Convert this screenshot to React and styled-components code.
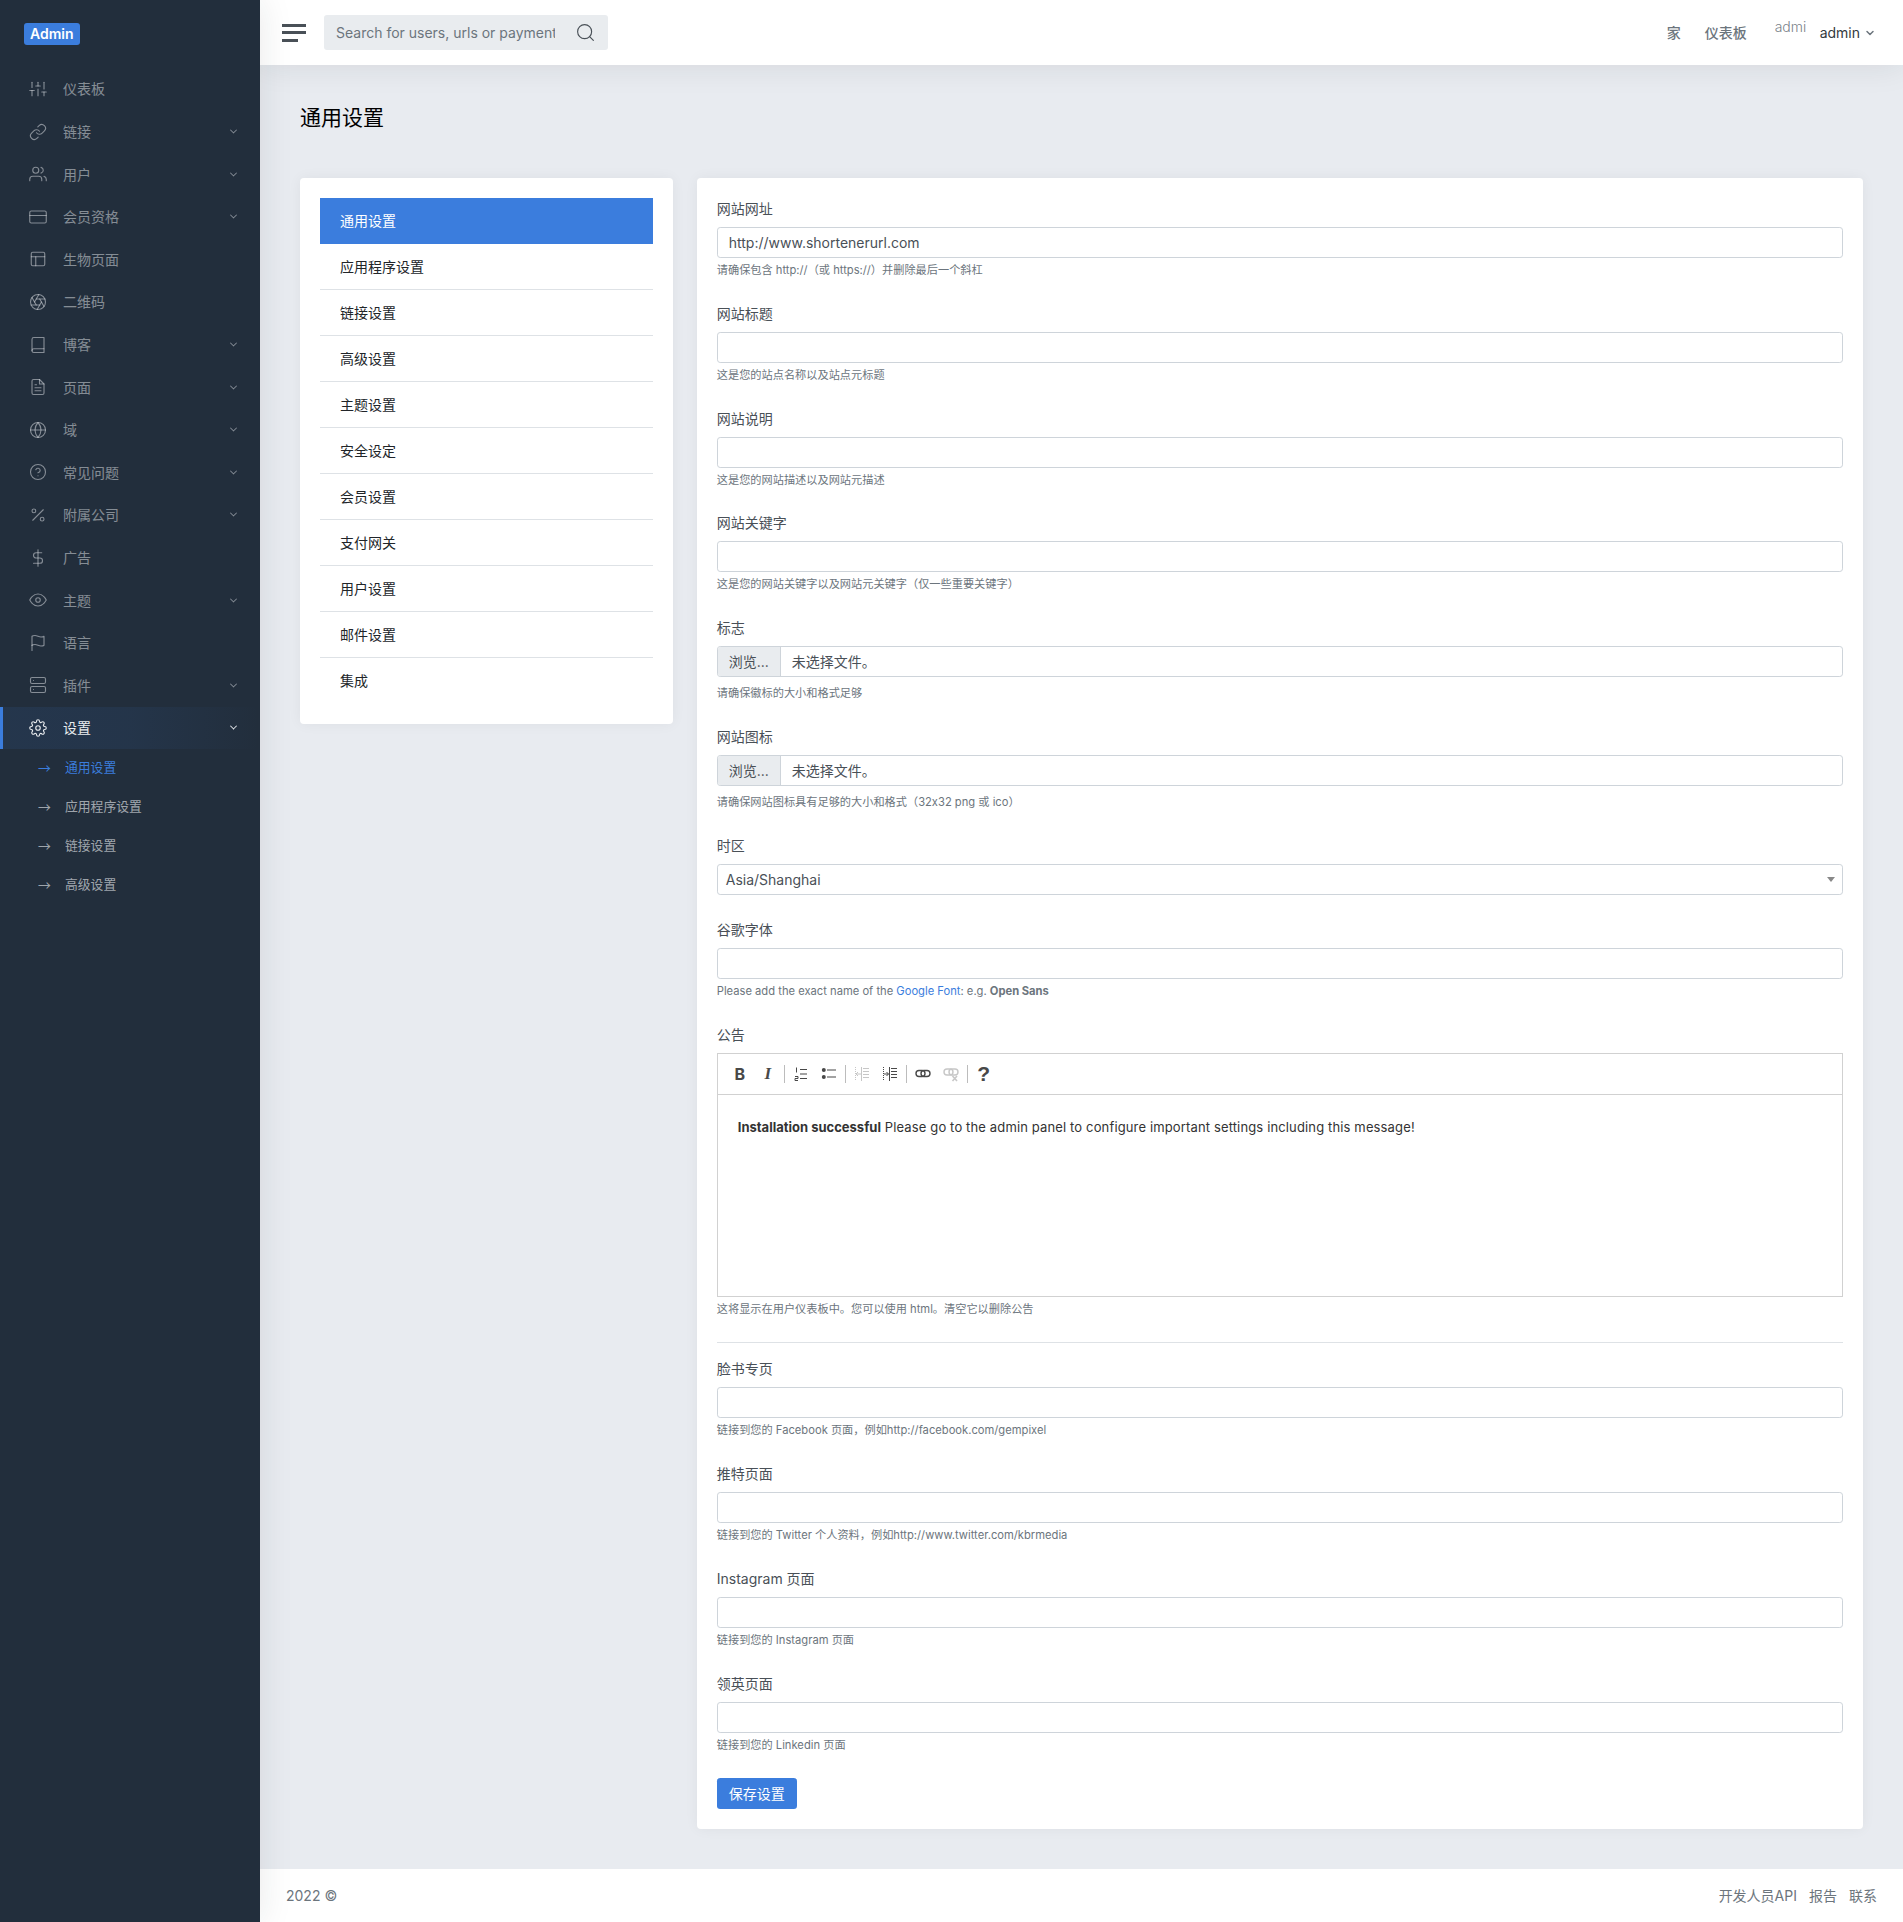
import React from 'react'
import styled, { createGlobalStyle } from 'styled-components'
import {
  FiSliders, FiLink, FiUsers, FiCreditCard, FiLayout, FiAperture, FiBook, FiFileText,
  FiGlobe, FiHelpCircle, FiPercent, FiDollarSign, FiEye, FiFlag, FiServer, FiSettings,
  FiSearch, FiChevronDown,
} from 'react-icons/fi'

const GlobalStyle = createGlobalStyle`
  * { box-sizing: border-box; }
  body {
    margin: 0;
    font-family: Inter, "Noto Sans CJK SC", sans-serif;
    font-size: 14px;
    line-height: 1.5;
    color: #495057;
    background: #e8ebf0;
  }
`

const Wrapper = styled.div`
  display: flex;
  min-height: 1922px;
`
const Sidebar = styled.nav`
  position: relative;
  z-index: 2;
  flex: 0 0 260px;
  background: #222e3c;
  box-shadow: 0 0 32px rgba(33, 37, 41, 0.1);
`
const Brand = styled.div`
  display: flex;
  height: 67.7px;
  padding: 23px 24px 0;
`
const BrandBadge = styled.span`
  height: 22px;
  padding: 0 6px;
  border-radius: 3px;
  background: #3b7ddd;
  color: #fff;
  font-weight: 600;
  line-height: 22px;
`
const SideItem = styled.a`
  display: flex;
  align-items: center;
  padding: 10.8px 22px 10.8px 26px;
  border-left: 3px solid ${p => (p.$active ? '#3b7ddd' : 'transparent')};
  background: ${p =>
    p.$active
      ? 'linear-gradient(90deg, rgba(59,125,221,.1), rgba(59,125,221,.0875) 50%, transparent)'
      : 'none'};
  color: ${p => (p.$active ? '#e9ecef' : 'rgba(233,236,239,.5)')};
  svg {
    flex: none;
    margin-right: 16px;
    stroke-width: 1.5;
  }
`
const Caret = styled.i`
  width: 5px;
  height: 5px;
  margin-left: auto;
  margin-right: 2px;
  border-right: 1.2px solid currentColor;
  border-bottom: 1.2px solid currentColor;
  transform: rotate(45deg) translate(-1px, -1px);
`
const SubList = styled.div`
  margin-top: -1px;
`
const SubItem = styled.a`
  display: flex;
  padding: 9.9px 0 9.9px 38px;
  font-size: 12.8px;
  color: ${p => (p.$active ? '#3b7ddd' : 'rgba(233,236,239,.65)')};
  &::before {
    content: '→';
    width: 27px;
    font-family: "Noto Sans CJK SC", sans-serif;
  }
`

const Main = styled.div`
  flex: 1;
  min-width: 0;
  display: flex;
  flex-direction: column;
`
const TopBar = styled.header`
  position: relative;
  z-index: 1;
  display: flex;
  align-items: center;
  height: 65px;
  padding: 0 27px 0 22px;
  background: #fff;
  box-shadow: 0 0 32px rgba(33, 37, 41, 0.1);
`
const Hamburger = styled.div`
  display: flex;
  flex-direction: column;
  gap: 4.5px;
  width: 24px;
  margin-right: 18px;
`
const HamburgerBar = styled.span`
  display: block;
  height: 3px;
  width: ${p => p.$w}px;
  background: #495057;
`
const SearchBox = styled.form`
  display: flex;
  align-items: center;
  width: 284px;
  height: 35px;
  padding-left: 12px;
  border-radius: 3px;
  background: #e9ecef;
  color: #495057;
  svg {
    margin-left: 20px;
    stroke-width: 1.3;
  }
`
const SearchInput = styled.input`
  width: 219px;
  padding: 0;
  border: 0;
  outline: 0;
  background: none;
  font: inherit;
  &::placeholder {
    color: #6c757d;
    opacity: 1;
  }
`
const TopNav = styled.div`
  display: flex;
  align-items: center;
  margin-left: auto;
`
const TopLink = styled.a`
  margin-right: ${p => p.$mr}px;
  color: #6c757d;
  font-weight: 500;
`
const AvatarAlt = styled.span`
  width: 36px;
  height: 36px;
  margin-right: 9px;
  overflow: hidden;
  color: #7b838a;
  font-weight: 300;
  line-height: 24px;
`
const UserName = styled.span`
  color: #343a40;
  svg {
    margin-left: 4px;
    stroke-width: 3;
    color: #6c757d;
    vertical-align: -1px;
  }
`

const Content = styled.main`
  flex: 1;
  padding: 40px;
`
const PageTitle = styled.h1`
  margin: 0 0 48px;
  color: #000;
  font-size: 21px;
  font-weight: 400;
  line-height: 25px;
`
const Columns = styled.div`
  display: grid;
  grid-template-columns: 372.75px 1fr;
  gap: 24px;
  align-items: start;
`
const Card = styled.section`
  padding: 20px;
  border-radius: 4px;
  background: #fff;
  box-shadow: 0 0 14px rgba(33, 37, 41, 0.05);
`
const MenuItem = styled.a`
  display: block;
  height: 46px;
  padding: 11.5px 20px;
  border-bottom: 1px solid ${p => (p.$last || p.$active ? 'transparent' : '#dee2e6')};
  background: ${p => (p.$active ? '#3b7ddd' : 'none')};
  color: ${p => (p.$active ? '#fff' : '#212529')};
`

const Field = styled.div`
  margin-bottom: ${p => (p.$editor ? '24.5px' : '24px')};
`
const Label = styled.label`
  display: block;
  margin-bottom: 8px;
`
const TextInput = styled.input`
  display: block;
  width: 100%;
  height: 31px;
  padding: 4px 11px;
  border: 1px solid #ced4da;
  border-radius: 3.2px;
  outline: 0;
  background: #fff;
  color: #495057;
  font: inherit;
`
const Help = styled.p`
  margin: ${p => (p.$wide ? '8px' : '4px')} 0 0;
  color: #6c757d;
  font-size: 11.2px;
  line-height: 16.8px;
  a {
    color: #3b7ddd;
  }
  strong {
    font-weight: 700;
  }
`
const FileBox = styled.div`
  display: flex;
  height: 31px;
  border: 1px solid #ced4da;
  border-radius: 3.2px;
  overflow: hidden;
`
const FileButton = styled.span`
  flex: 0 0 63px;
  padding: 4px 0 0 11px;
  border-right: 1px solid #ced4da;
  background: #e9ecef;
`
const FileName = styled.span`
  padding: 4px 0 0 11px;
`
const SelectBox = styled.div`
  display: flex;
  align-items: center;
  justify-content: space-between;
  height: 31px;
  padding: 0 7px 0 8px;
  border: 1px solid #ced4da;
  border-radius: 3.2px;
  &::after {
    content: '';
    border-style: solid;
    border-width: 5px 4px 0;
    border-color: #888 transparent transparent;
  }
`
const Editor = styled.div`
  border: 1px solid #d1d1d1;
`
const EditorBar = styled.div`
  display: flex;
  align-items: center;
  height: 41px;
  padding-left: 8px;
  border-bottom: 1px solid #d1d1d1;
`
const ToolButton = styled.span`
  display: flex;
  align-items: center;
  justify-content: center;
  width: 28px;
  height: 28px;
  color: #484848;
  font-size: 16px;
  font-weight: 700;
  line-height: 1;
  opacity: ${p => (p.$off ? 0.3 : 1)};
`
const ItalicGlyph = styled.span`
  font-family: "Liberation Serif", serif;
  font-size: 17px;
  font-style: italic;
`
const HelpGlyph = styled.span`
  font-family: "Liberation Sans", sans-serif;
  font-size: 21px;
`
const ToolSep = styled.i`
  width: 1px;
  height: 18px;
  margin: 0 2px;
  background: #bcbcbc;
`
const EditorBody = styled.div`
  height: 201px;
  padding: 22px 20px;
  color: #333;
  font-size: 13px;
  line-height: 20px;
  letter-spacing: 0.14px;
  strong {
    font-weight: 700;
    letter-spacing: 0;
  }
`
const Divider = styled.hr`
  height: 1px;
  margin: 0 0 15.5px;
  border: 0;
  background: #dee2e6;
`
const SaveButton = styled.button`
  display: block;
  width: 80px;
  height: 31px;
  padding: 0;
  border: 0;
  border-radius: 3.2px;
  background: #3b7ddd;
  color: #fff;
  font: inherit;
`

const Footer = styled.footer`
  display: flex;
  justify-content: space-between;
  padding: 16px 26px;
  background: #fff;
  color: #6c757d;
`
const FooterLinks = styled.div`
  display: flex;
  gap: 12px;
`

const sideItems = [
  { label: '仪表板', icon: FiSliders },
  { label: '链接', icon: FiLink, more: true },
  { label: '用户', icon: FiUsers, more: true },
  { label: '会员资格', icon: FiCreditCard, more: true },
  { label: '生物页面', icon: FiLayout },
  { label: '二维码', icon: FiAperture },
  { label: '博客', icon: FiBook, more: true },
  { label: '页面', icon: FiFileText, more: true },
  { label: '域', icon: FiGlobe, more: true },
  { label: '常见问题', icon: FiHelpCircle, more: true },
  { label: '附属公司', icon: FiPercent, more: true },
  { label: '广告', icon: FiDollarSign },
  { label: '主题', icon: FiEye, more: true },
  { label: '语言', icon: FiFlag },
  { label: '插件', icon: FiServer, more: true },
  { label: '设置', icon: FiSettings, more: true, active: true },
]
const subItems = ['通用设置', '应用程序设置', '链接设置', '高级设置']
const menuItems = [
  '通用设置', '应用程序设置', '链接设置', '高级设置', '主题设置', '安全设定',
  '会员设置', '支付网关', '用户设置', '邮件设置', '集成',
]
const socialFields = [
  ['脸书专页', '链接到您的 Facebook 页面，例如http://facebook.com/gempixel'],
  ['推特页面', '链接到您的 Twitter 个人资料，例如http://www.twitter.com/kbrmedia'],
  ['Instagram 页面', '链接到您的 Instagram 页面'],
  ['领英页面', '链接到您的 Linkedin 页面'],
]

const Glyph = ({ children }) => (
  <svg width="16" height="16" viewBox="0 0 16 16" fill="none" stroke="currentColor">
    {children}
  </svg>
)

const TextField = ({ label, help, value }) => (
  <Field>
    <Label>{label}</Label>
    <TextInput readOnly defaultValue={value} />
    <Help>{help}</Help>
  </Field>
)

const FileField = ({ label, help }) => (
  <Field>
    <Label>{label}</Label>
    <FileBox>
      <FileButton>浏览...</FileButton>
      <FileName>未选择文件。</FileName>
    </FileBox>
    <Help $wide>{help}</Help>
  </Field>
)

const App = () => (
  <Wrapper>
    <GlobalStyle />
    <Sidebar>
      <Brand>
        <BrandBadge>Admin</BrandBadge>
      </Brand>
      {sideItems.map(({ label, icon: Icon, more, active }) => (
        <SideItem key={label} $active={active}>
          <Icon size={18} />
          {label}
          {more && <Caret />}
        </SideItem>
      ))}
      <SubList>
        {subItems.map((label, i) => (
          <SubItem key={label} $active={i === 0}>
            {label}
          </SubItem>
        ))}
      </SubList>
    </Sidebar>
    <Main>
      <TopBar>
        <Hamburger>
          <HamburgerBar $w={24} />
          <HamburgerBar $w={24} />
          <HamburgerBar $w={16} />
        </Hamburger>
        <SearchBox>
          <SearchInput placeholder="Search for users, urls or payments" />
          <FiSearch size={21} />
        </SearchBox>
        <TopNav>
          <TopLink $mr={24}>家</TopLink>
          <TopLink $mr={28}>仪表板</TopLink>
          <AvatarAlt>admi</AvatarAlt>
          <UserName>
            admin
            <FiChevronDown size={12} />
          </UserName>
        </TopNav>
      </TopBar>
      <Content>
        <PageTitle>通用设置</PageTitle>
        <Columns>
          <Card>
            {menuItems.map((label, i) => (
              <MenuItem key={label} $active={i === 0} $last={i === menuItems.length - 1}>
                {label}
              </MenuItem>
            ))}
          </Card>
          <Card>
            <TextField
              label="网站网址"
              value="http://www.shortenerurl.com"
              help="请确保包含 http://（或 https://）并删除最后一个斜杠"
            />
            <TextField label="网站标题" help="这是您的站点名称以及站点元标题" />
            <TextField label="网站说明" help="这是您的网站描述以及网站元描述" />
            <TextField label="网站关键字" help="这是您的网站关键字以及网站元关键字（仅一些重要关键字）" />
            <FileField label="标志" help="请确保徽标的大小和格式足够" />
            <FileField label="网站图标" help="请确保网站图标具有足够的大小和格式（32x32 png 或 ico）" />
            <Field>
              <Label>时区</Label>
              <SelectBox>Asia/Shanghai</SelectBox>
            </Field>
            <Field>
              <Label>谷歌字体</Label>
              <TextInput readOnly />
              <Help>
                Please add the exact name of the <a>Google Font</a>: e.g. <strong>Open Sans</strong>
              </Help>
            </Field>
            <Field $editor>
              <Label>公告</Label>
              <Editor>
                <EditorBar>
                  <ToolButton>B</ToolButton>
                  <ToolButton>
                    <ItalicGlyph>I</ItalicGlyph>
                  </ToolButton>
                  <ToolSep />
                  <ToolButton>
                    <Glyph>
                      <path d="M7 3.5h7M7 8h7M7 12.5h7" strokeWidth="1.2" />
                      <path d="M3.5 1.5v5M2 10.5h3v2H2v2h3" strokeWidth="1" />
                    </Glyph>
                  </ToolButton>
                  <ToolButton>
                    <Glyph>
                      <path d="M6 4h9M6 11h9" strokeWidth="1.2" />
                      <circle cx="2.8" cy="4" r="2" fill="currentColor" stroke="none" />
                      <circle cx="2.8" cy="11" r="2" fill="currentColor" stroke="none" />
                    </Glyph>
                  </ToolButton>
                  <ToolSep />
                  <ToolButton $off>
                    <Glyph>
                      <path d="M1.5 1v14" strokeWidth="1" strokeDasharray="1 1" />
                      <path d="M7.5 1v14" strokeWidth="1" />
                      <path d="M9 2.5h6M9 5.5h6M9 8.5h6M9 11.5h6" strokeWidth="1" />
                      <path d="M7 8H2M4 6L2 8l2 2" strokeWidth="1" />
                    </Glyph>
                  </ToolButton>
                  <ToolButton>
                    <Glyph>
                      <path d="M1.5 1v14" strokeWidth="1" strokeDasharray="1 1" />
                      <path d="M7.5 1v14" strokeWidth="1" />
                      <path d="M9 2.5h6M9 5.5h6M9 8.5h6M9 11.5h6" strokeWidth="1" />
                      <path d="M2 8h4.5M4.5 6l2 2-2 2" strokeWidth="1" />
                    </Glyph>
                  </ToolButton>
                  <ToolSep />
                  <ToolButton>
                    <Glyph>
                      <rect x="1" y="4.5" width="9" height="6" rx="3" strokeWidth="1.4" />
                      <rect x="6" y="4.5" width="9" height="6" rx="3" strokeWidth="1.4" />
                    </Glyph>
                  </ToolButton>
                  <ToolButton $off>
                    <Glyph>
                      <rect x="1" y="3" width="9" height="6" rx="3" strokeWidth="1.4" />
                      <rect x="6" y="3" width="9" height="6" rx="3" strokeWidth="1.4" />
                      <path d="M9.5 10l4.5 5M14 10l-4.5 5" strokeWidth="1.6" />
                    </Glyph>
                  </ToolButton>
                  <ToolSep />
                  <ToolButton>
                    <HelpGlyph>?</HelpGlyph>
                  </ToolButton>
                </EditorBar>
                <EditorBody>
                  <strong>Installation successful</strong> Please go to the admin panel to configure
                  important settings including this message!
                </EditorBody>
              </Editor>
              <Help>这将显示在用户仪表板中。您可以使用 html。清空它以删除公告</Help>
            </Field>
            <Divider />
            {socialFields.map(([label, help]) => (
              <TextField key={label} label={label} help={help} />
            ))}
            <SaveButton>保存设置</SaveButton>
          </Card>
        </Columns>
      </Content>
      <Footer>
        <span>2022 ©</span>
        <FooterLinks>
          <span>开发人员API</span>
          <span>报告</span>
          <span>联系</span>
        </FooterLinks>
      </Footer>
    </Main>
  </Wrapper>
)

export default App
